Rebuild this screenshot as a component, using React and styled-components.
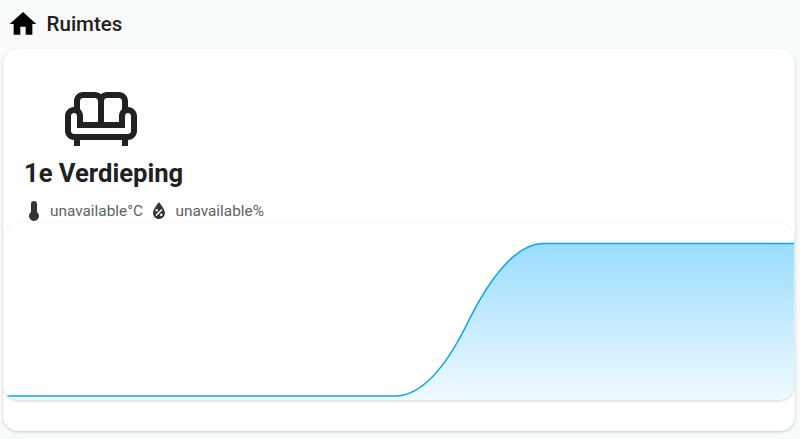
import React from "react";
import styled, { createGlobalStyle } from "styled-components";

const GlobalStyle = createGlobalStyle`
  html, body {
    margin: 0;
    height: 100%;
    overflow: hidden;
    background: #f9fafa;
    font-family: Roboto, "Liberation Sans", sans-serif;
  }
`;

const Page = styled.div`
  padding: 0 5px 0 3px;
`;

const Header = styled.div`
  display: flex;
  align-items: center;
  gap: 8px;
  height: 49px;
  padding-left: 3.6px;
  box-sizing: border-box;
`;

const HomeIcon = styled.svg`
  width: 32px;
  height: 32px;
  margin-bottom: 1.5px;
  fill: #000;
`;

const Title = styled.h1`
  margin: 0 0 2px;
  font-size: 20.5px;
  font-weight: 500;
  line-height: 24px;
  color: #212121;
`;

const Card = styled.div`
  height: 382px;
  background: #fff;
  border-radius: 15px;
  box-shadow: 0 1px 3px rgba(0, 0, 0, 0.2);
  overflow: hidden;
`;

const Info = styled.div`
  height: 174px;
  padding: 31px 0 0 21px;
  box-sizing: border-box;
`;

const RoomIcon = styled.svg`
  display: block;
  width: 72px;
  height: 72px;
  margin-left: 41px;
  fill: #212121;
`;

const RoomName = styled.div`
  margin-top: 7px;
  font-size: 25.6px;
  font-weight: 700;
  line-height: 28px;
  color: #212121;
`;

const Sensors = styled.div`
  display: flex;
  align-items: center;
  margin: 12px 0 0 -2px;
  height: 24px;
`;

const SensorIcon = styled.svg`
  width: 24px;
  height: 24px;
  fill: #333;
  flex: none;
`;

const SensorText = styled.span`
  margin: 0 4.5px 0 4px;
  font-size: 15.36px;
  color: #616161;
`;

const ChartCard = styled.div`
  height: 177px;
  margin-right: 1px;
  background: #fff;
  border-radius: 15px;
  box-shadow: 0 1px 3px rgba(0, 0, 0, 0.18);
  overflow: hidden;
`;

const Chart = styled.svg`
  display: block;
  width: 100%;
  height: 100%;
`;

const curve =
  "M0 173H392C422 173 447 137 467 95C485 59 512 20.5 540 20.5H791";

export default function App() {
  return (
    <Page>
      <GlobalStyle />
      <Header>
        <HomeIcon viewBox="0 0 24 24">
          <path d="M10,20V14H14V20H19V12H22L12,3L2,12H5V20H10Z" />
        </HomeIcon>
        <Title>Ruimtes</Title>
      </Header>
      <Card>
        <Info>
          <RoomIcon viewBox="0 0 24 24">
            <path d="M21 9V7C21 5.35 19.65 4 18 4H14C13.23 4 12.53 4.3 12 4.78C11.47 4.3 10.77 4 10 4H6C4.35 4 3 5.35 3 7V9C1.35 9 0 10.35 0 12V17C0 18.65 1.35 20 3 20V22H5V20H19V22H21V20C22.65 20 24 18.65 24 17V12C24 10.35 22.65 9 21 9M14 6H18C18.55 6 19 6.45 19 7V9.78C18.39 10.33 18 11.12 18 12V14H13V7C13 6.45 13.45 6 14 6M5 7C5 6.45 5.45 6 6 6H10C10.55 6 11 6.45 11 7V14H6V12C6 11.12 5.61 10.33 5 9.78V7M22 17C22 17.55 21.55 18 21 18H3C2.45 18 2 17.55 2 17V12C2 11.45 2.45 11 3 11S4 11.45 4 12V16H20V12C20 11.45 20.45 11 21 11S22 11.45 22 12V17Z" />
          </RoomIcon>
          <RoomName>1e Verdieping</RoomName>
          <Sensors>
            <SensorIcon viewBox="0 0 24 24">
              <path d="M15 13V5A3 3 0 0 0 9 5V13A5 5 0 1 0 15 13Z" />
            </SensorIcon>
            <SensorText>unavailable°C</SensorText>
            <SensorIcon viewBox="0 0 24 24">
              <path d="M12,3.25C12,3.25 6,10 6,14C6,17.32 8.69,20 12,20A6,6 0 0,0 18,14C18,10 12,3.25 12,3.25M14.47,9.97L15.53,11.03L9.53,17.03L8.47,15.97M9.75,10A1.25,1.25 0 0,1 11,11.25A1.25,1.25 0 0,1 9.75,12.5A1.25,1.25 0 0,1 8.5,11.25A1.25,1.25 0 0,1 9.75,10M14.25,14.5A1.25,1.25 0 0,1 15.5,15.75A1.25,1.25 0 0,1 14.25,17A1.25,1.25 0 0,1 13,15.75A1.25,1.25 0 0,1 14.25,14.5Z" />
            </SensorIcon>
            <SensorText>unavailable%</SensorText>
          </Sensors>
        </Info>
        <ChartCard>
          <Chart viewBox="0 0 791 177" preserveAspectRatio="none">
            <defs>
              <linearGradient id="fill" x1="0" y1="0" x2="0" y2="1">
                <stop offset="0" stopColor="#00aaff" stopOpacity="0.4" />
                <stop offset="1" stopColor="#00aaff" stopOpacity="0.06" />
              </linearGradient>
            </defs>
            <path d={`${curve}V177H0Z`} fill="url(#fill)" />
            <path d={curve} fill="none" stroke="#0aa8f5" strokeWidth="1.6" />
          </Chart>
        </ChartCard>
      </Card>
    </Page>
  );
}
